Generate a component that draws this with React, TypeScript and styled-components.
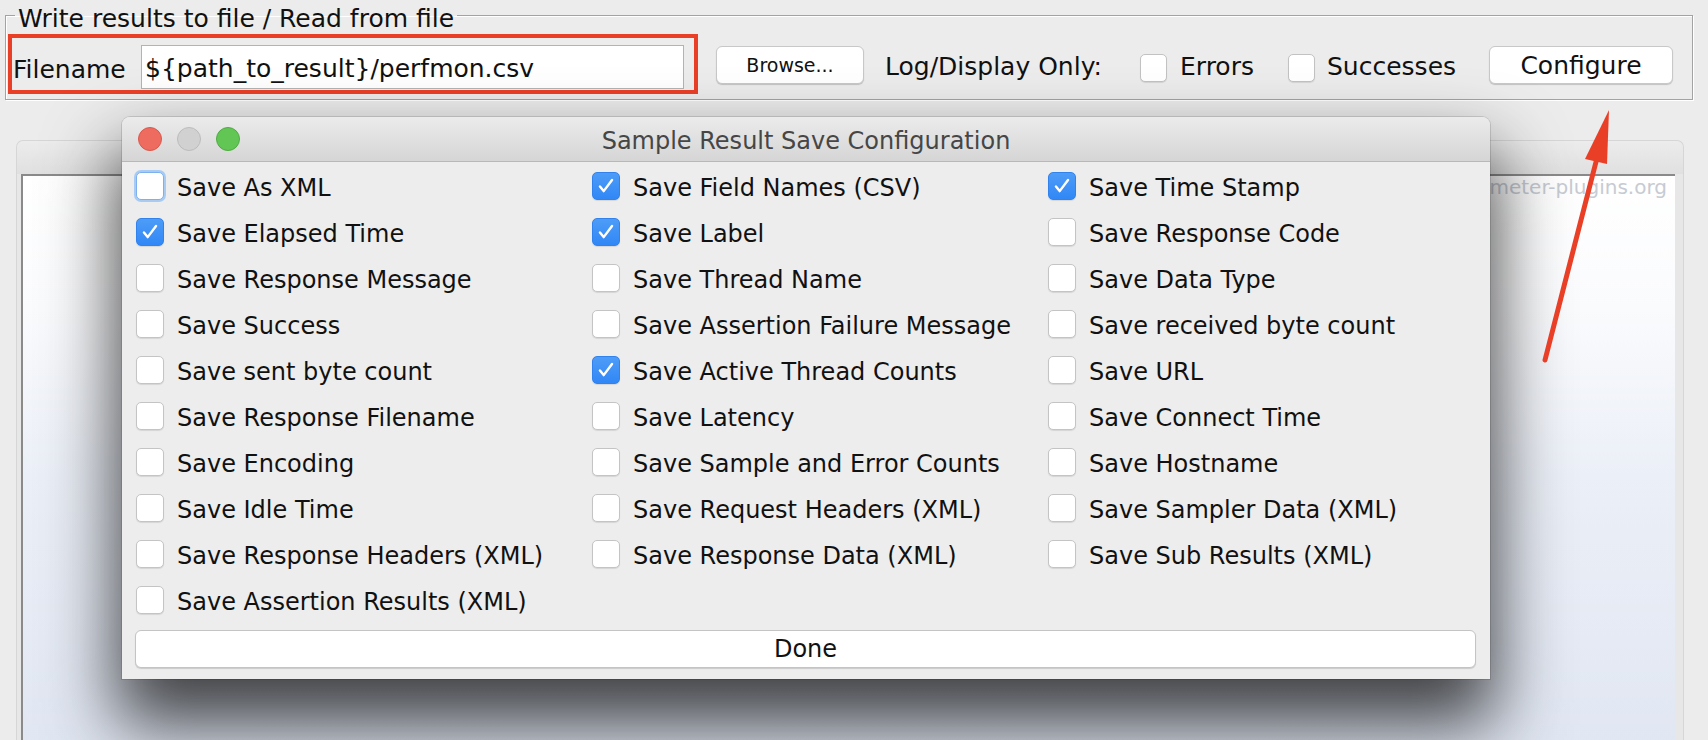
import React from 'react'
import styled, { createGlobalStyle } from 'styled-components'

const GlobalStyle = createGlobalStyle`
  html, body {
    margin: 0;
    padding: 0;
  }
  body {
    background: #ececec;
    font-family: 'DejaVu Sans', 'Liberation Sans', sans-serif;
    color: #111;
  }
`

const Page = styled.div`
  position: relative;
  width: 1708px;
  height: 740px;
  overflow: hidden;
  background: #ececec;
`

const GroupBox = styled.fieldset`
  margin: 0 15px 0 5px;
  padding: 0 0 5px 2px;
  min-width: 0;
  border: 1px solid #a3a3a3;
  box-shadow: 1px 1px 0 #fff, inset 1px 1px 0 #fff;
`

const Legend = styled.legend`
  margin-left: 7px;
  padding: 8px 3px 0;
  font-size: 25px;
  line-height: 22px;
`

const Toolbar = styled.div`
  display: flex;
  align-items: center;
  margin-top: 4px;
  height: 60px;
`

const Highlight = styled.div`
  display: flex;
  align-items: center;
  box-sizing: border-box;
  width: 690px;
  height: 60px;
  padding: 6px 10px 0 1px;
  border: 4px solid #ea3f27;
`

const Label = styled.span<{ $width?: number; $pad?: number }>`
  display: inline-block;
  box-sizing: border-box;
  font-size: 25px;
  line-height: 30px;
  padding-top: 6px;
  padding-left: ${p => p.$pad ?? 0}px;
  width: ${p => (p.$width ? `${p.$width}px` : 'auto')};
  white-space: nowrap;
  flex: none;
`

const TextField = styled.input`
  margin-left: auto;
  box-sizing: border-box;
  width: 543px;
  height: 44px;
  padding: 2px 0 0 3px;
  border: 1px solid #b3b3b3;
  background: #fff;
  font-family: inherit;
  font-size: 25px;
  color: #111;
  outline: none;
`

const PushButton = styled.button<{ $width: number; $size: number; $gap: number }>`
  flex: none;
  box-sizing: border-box;
  width: ${p => p.$width}px;
  height: 38px;
  margin-left: ${p => p.$gap}px;
  margin-top: 2px;
  padding: 0;
  border: 1px solid #c8c8c8;
  border-radius: 6px;
  background: #fff;
  box-shadow: 0 1px 1px rgba(0, 0, 0, 0.18);
  font-family: inherit;
  font-size: ${p => p.$size}px;
  color: #111;
`

const ToolCheck = styled.span`
  flex: none;
  box-sizing: border-box;
  width: 27px;
  height: 28px;
  margin-top: 8px;
  border: 1px solid #c2c2c2;
  border-radius: 5px;
  background: #fff;
  box-shadow: 0 1px 1px rgba(0, 0, 0, 0.1);
`

const ResultsPanel = styled.div`
  margin: 40px 24px 0 16px;
  border: 1px solid #d6d6d6;
  border-bottom: none;
  border-radius: 7px 7px 0 0;
  background: #e7e7e7;
  padding: 0 8px 0 4px;
`

const PanelHeader = styled.div`
  height: 33px;
  background: linear-gradient(#ececec, #e0e0e0);
  margin: 0 -8px 0 -4px;
  border-radius: 7px 7px 0 0;
`

const PanelBody = styled.div`
  height: 600px;
  border-top: 2px solid #8a8a8a;
  border-left: 2px solid #8a8a8a;
  background: linear-gradient(180deg, #ffffff 0%, #fafbfd 22%, #ebeff7 50%, #e0e6f2 100%);
  text-align: right;
`

const Watermark = styled.div`
  padding: 0 8px 0 0;
  font-size: 20px;
  line-height: 22px;
  color: #c6cbd3;
`

const Dialog = styled.div`
  position: absolute;
  left: 122px;
  top: 117px;
  width: 1368px;
  height: 562px;
  display: flex;
  flex-direction: column;
  background: #ededed;
  border-radius: 8px 8px 0 0;
  box-shadow: 0 0 0 1px rgba(0, 0, 0, 0.12), 0 40px 70px 6px rgba(0, 0, 0, 0.72);
`

const TitleBar = styled.div`
  display: grid;
  grid-template-columns: 1fr auto 1fr;
  align-items: center;
  height: 44px;
  border-bottom: 1px solid #b8b8b8;
  border-radius: 8px 8px 0 0;
  background: linear-gradient(#ebebeb, #d5d5d5);
`

const Lights = styled.div`
  display: flex;
  gap: 15px;
  padding-left: 16px;
`

const Light = styled.span<{ $fill: string; $edge: string }>`
  width: 24px;
  height: 24px;
  border-radius: 50%;
  box-sizing: border-box;
  background: ${p => p.$fill};
  border: 1px solid ${p => p.$edge};
`

const Title = styled.div`
  font-size: 24px;
  padding-top: 3px;
  color: #464646;
`

const OptionGrid = styled.div`
  display: grid;
  grid-template-columns: repeat(3, 456px);
  grid-auto-rows: 46px;
  padding: 1px 0 0 14px;
`

const Option = styled.label`
  display: flex;
  align-items: center;
  gap: 13px;
  font-size: 24px;
  white-space: nowrap;
`

const OptionText = styled.span`
  padding-top: 3px;
`

const Box = styled.span<{ $checked?: boolean; $focused?: boolean }>`
  flex: none;
  display: inline-flex;
  align-items: center;
  justify-content: center;
  box-sizing: border-box;
  width: 28px;
  height: 28px;
  border-radius: 5px;
  background: ${p => (p.$checked ? 'linear-gradient(#4d9cf8, #3187f5)' : '#fff')};
  border: 1px solid ${p => (p.$checked ? '#3182ec' : p.$focused ? '#7eb0ee' : '#c4c4c4')};
  box-shadow: ${p => (p.$focused ? '0 0 0 2px #a8cbf4' : '0 1px 1px rgba(0, 0, 0, 0.1)')};
`

const DoneButton = styled.button`
  margin: 7px 14px 11px 13px;
  height: 38px;
  border: 1px solid #c4c4c4;
  border-radius: 6px;
  background: #fff;
  box-shadow: 0 1px 1px rgba(0, 0, 0, 0.15);
  font-family: inherit;
  font-size: 24px;
  color: #111;
`

const Arrow = styled.svg`
  position: absolute;
  left: 1530px;
  top: 100px;
`

const options: [string, boolean][] = [
  ['Save As XML', false],
  ['Save Field Names (CSV)', true],
  ['Save Time Stamp', true],
  ['Save Elapsed Time', true],
  ['Save Label', true],
  ['Save Response Code', false],
  ['Save Response Message', false],
  ['Save Thread Name', false],
  ['Save Data Type', false],
  ['Save Success', false],
  ['Save Assertion Failure Message', false],
  ['Save received byte count', false],
  ['Save sent byte count', false],
  ['Save Active Thread Counts', true],
  ['Save URL', false],
  ['Save Response Filename', false],
  ['Save Latency', false],
  ['Save Connect Time', false],
  ['Save Encoding', false],
  ['Save Sample and Error Counts', false],
  ['Save Hostname', false],
  ['Save Idle Time', false],
  ['Save Request Headers (XML)', false],
  ['Save Sampler Data (XML)', false],
  ['Save Response Headers (XML)', false],
  ['Save Response Data (XML)', false],
  ['Save Sub Results (XML)', false],
  ['Save Assertion Results (XML)', false],
]

const Check = () => (
  <svg width="28" height="28" viewBox="0 0 28 28">
    <path d="M7.5 14.5 L11.5 19.5 L20.5 7.5" fill="none" stroke="#fff" strokeWidth="2.6" strokeLinecap="round" strokeLinejoin="round" />
  </svg>
)

export default function App() {
  return (
    <Page>
      <GlobalStyle />
      <GroupBox>
        <Legend>Write results to file / Read from file</Legend>
        <Toolbar>
          <Highlight>
            <Label>Filename</Label>
            <TextField readOnly value="${path_to_result}/perfmon.csv" />
          </Highlight>
          <PushButton $width={148} $size={19} $gap={18}>Browse...</PushButton>
          <Label $width={276} $pad={21}>Log/Display Only:</Label>
          <ToolCheck />
          <Label $width={121} $pad={13}>Errors</Label>
          <ToolCheck />
          <Label $width={174} $pad={12}>Successes</Label>
          <PushButton $width={184} $size={25} $gap={0}>Configure</PushButton>
        </Toolbar>
      </GroupBox>

      <ResultsPanel>
        <PanelHeader />
        <PanelBody>
          <Watermark>jmeter-plugins.org</Watermark>
        </PanelBody>
      </ResultsPanel>

      <Dialog>
        <TitleBar>
          <Lights>
            <Light $fill="#ee6b5f" $edge="#d9584d" />
            <Light $fill="#d1d1d1" $edge="#bcbcbc" />
            <Light $fill="#62c655" $edge="#50ab43" />
          </Lights>
          <Title>Sample Result Save Configuration</Title>
          <span />
        </TitleBar>
        <OptionGrid>
          {options.map(([text, checked], i) => (
            <Option key={text}>
              <Box $checked={checked} $focused={i === 0}>{checked && <Check />}</Box>
              <OptionText>{text}</OptionText>
            </Option>
          ))}
        </OptionGrid>
        <DoneButton>Done</DoneButton>
      </Dialog>

      <Arrow width="100" height="270" viewBox="0 0 100 270">
        <line x1="15" y1="260" x2="67" y2="58" stroke="#ea3f27" strokeWidth="5" strokeLinecap="round" />
        <polygon points="79,10 55,59 77,64" fill="#ea3f27" />
      </Arrow>
    </Page>
  )
}
